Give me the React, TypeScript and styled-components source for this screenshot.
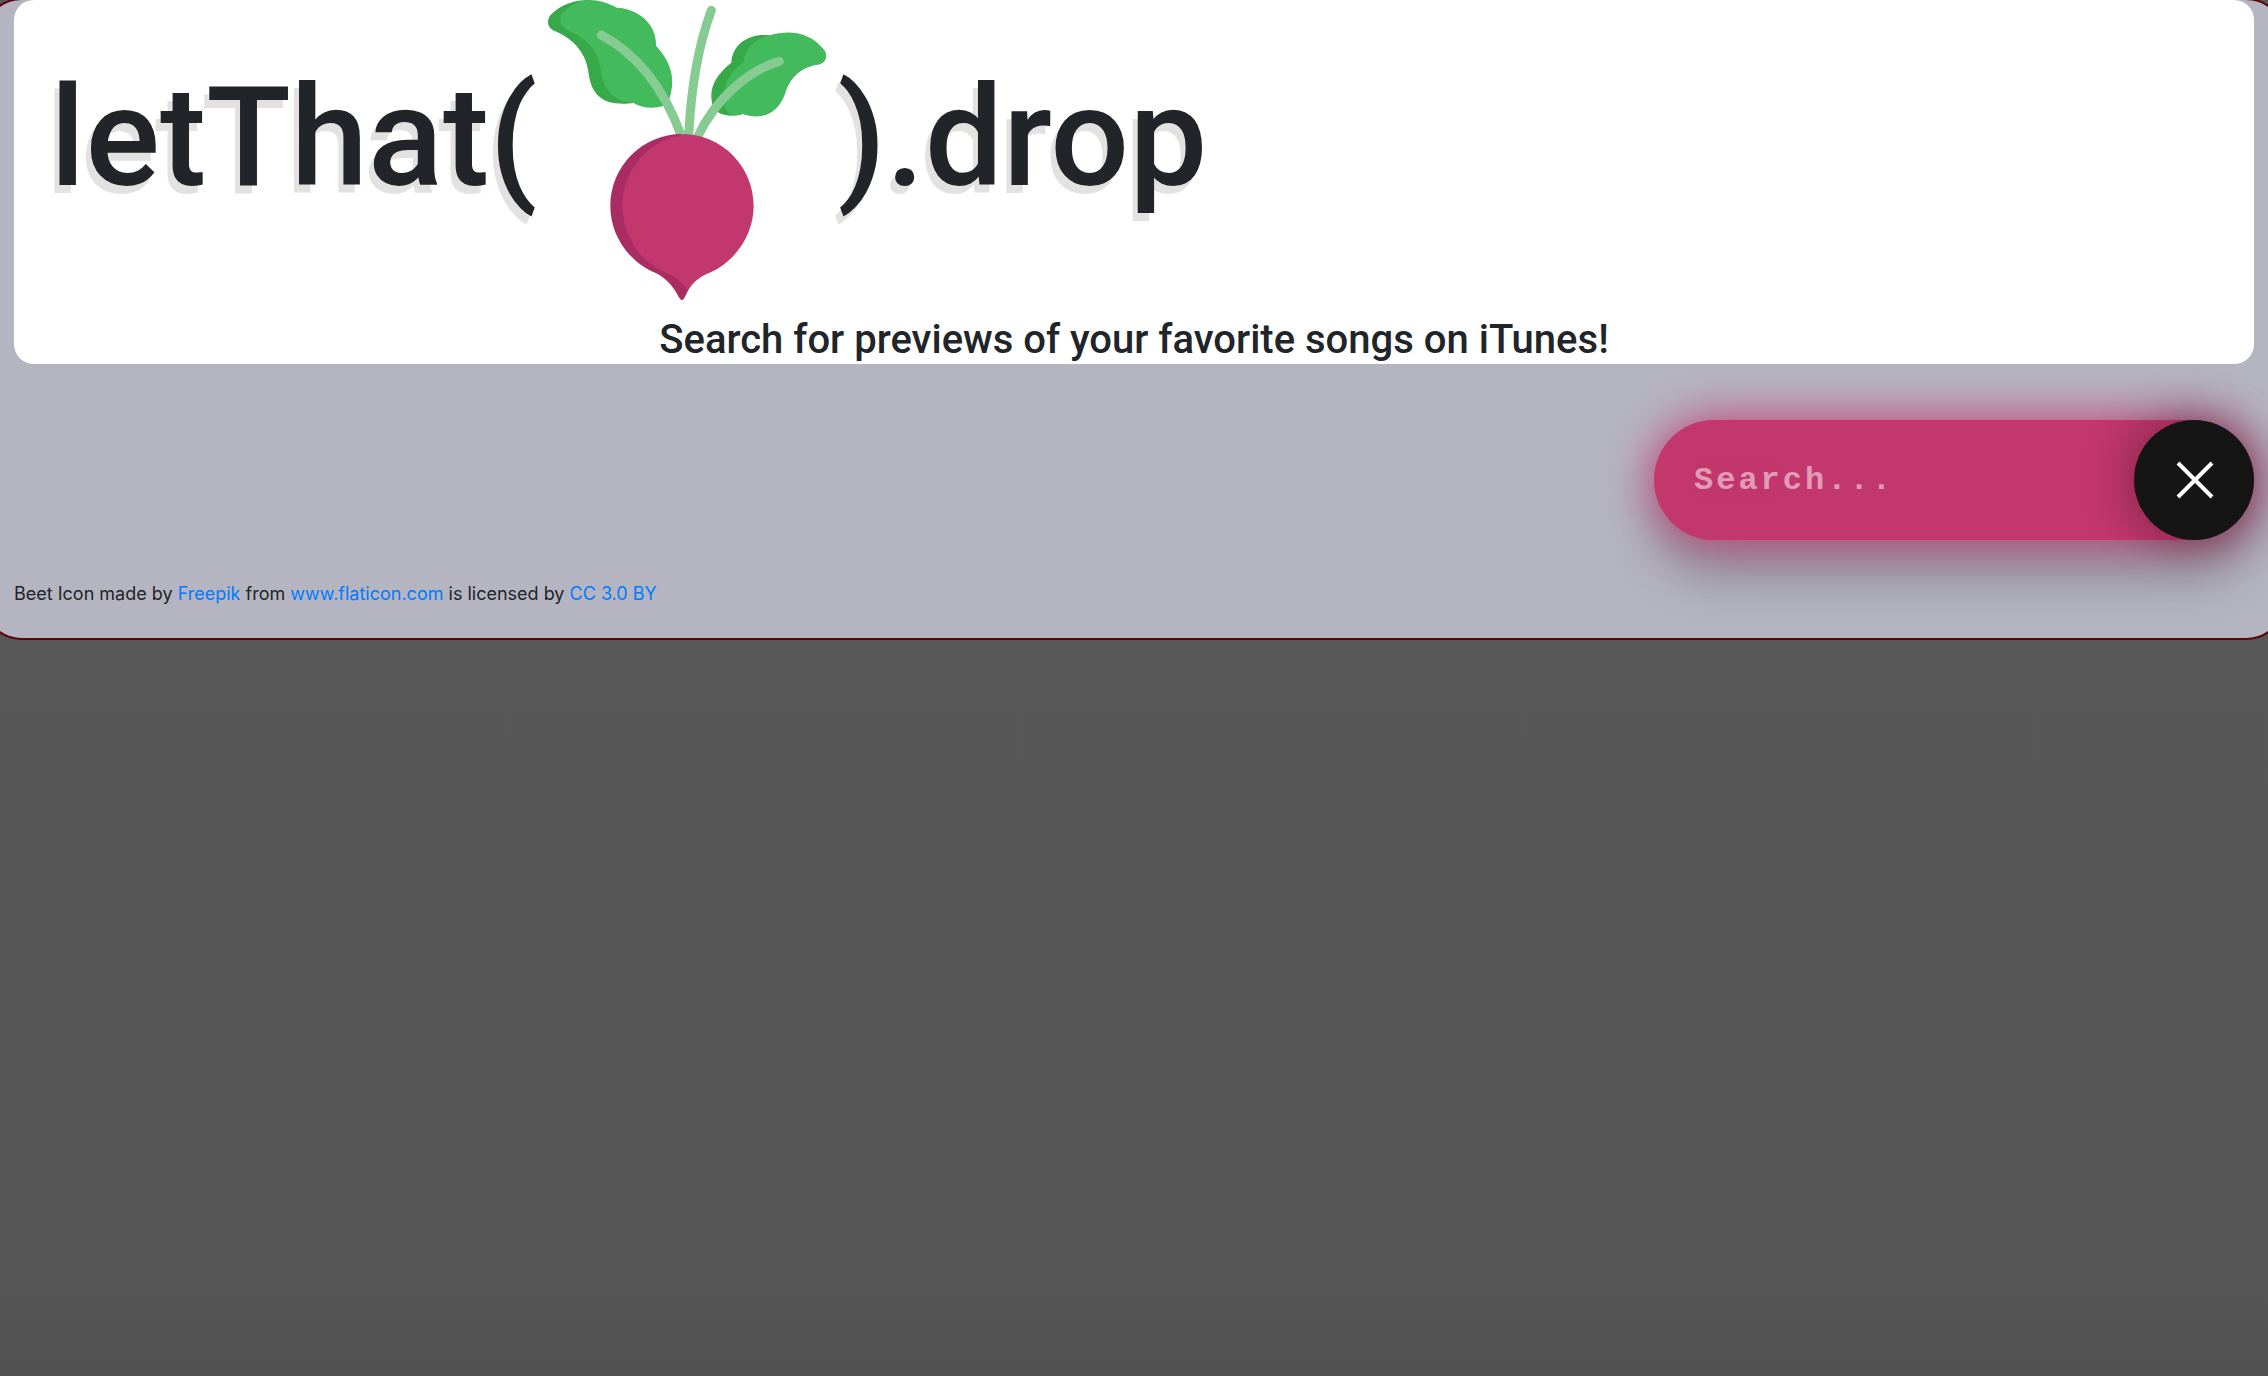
import React, { useState } from "react";
import styled, { createGlobalStyle } from "styled-components";

const GlobalStyle = createGlobalStyle`
  *, *::before, *::after { box-sizing: border-box; }
  body {
    margin: 0;
    min-height: 100vh;
    overflow-x: hidden;
    color: #212529;
    background: linear-gradient(to bottom, #575757 0%, #565656 94%, #505050 100%);
    font-family: Inter, "Liberation Sans", sans-serif;
    font-size: 32px;
    line-height: 48px;
  }
`;

const Panel = styled.main`
  display: flex;
  flex-direction: column;
  margin: -2px -18px 0;
  padding: 0 30px 30px;
  overflow: hidden;
  border: 2px solid #5c0208;
  border-radius: 40px;
  background: #b5b5c2;
`;

const Header = styled.header`
  border-radius: 20px;
  background: #fff;
  font-family: Roboto, "Liberation Sans", sans-serif;
`;

const Title = styled.h1`
  display: flex;
  align-items: flex-start;
  margin: 0;
  padding: 0 36px 16px;
  font-size: 139px;
  font-weight: 500;
  line-height: 168px;
  text-shadow: -5px 8px #e4e2e1;
`;

const TitleText = styled.span`
  padding-top: 54px;
`;

const BeetDrawing = styled.svg`
  width: 300px;
  height: 300px;
  flex: none;
`;

const Tagline = styled.h2`
  margin: 0;
  font-size: 40px;
  font-weight: 500;
  line-height: 48px;
  text-align: center;
`;

const SearchForm = styled.form`
  display: flex;
  justify-content: flex-end;
  padding: 56px 0 40px;
`;

const SearchInput = styled.input`
  width: 600px;
  height: 120px;
  padding: 0 160px 0 40px;
  border: 0;
  outline: 0;
  border-radius: 60px;
  background: #c2376e;
  box-shadow: 0 0 50px #c2376e, 0 40px 50px rgba(0, 0, 0, 0.2);
  color: #fff;
  font-family: "Liberation Mono", monospace;
  font-size: 32px;
  font-weight: 700;
  letter-spacing: 3px;

  &::placeholder {
    color: #fff;
    opacity: 0.5;
  }
`;

const CloseButton = styled.button`
  display: grid;
  place-items: center;
  width: 120px;
  height: 120px;
  margin-left: -120px;
  padding: 0;
  border: 0;
  border-radius: 50%;
  background: #151515;
  box-shadow: 0 0 50px rgba(0, 0, 0, 0.4);
  cursor: pointer;
  z-index: 1;
`;

const Credit = styled.footer`
  font-size: 18px;
  line-height: 28px;
`;

const CreditLink = styled.a`
  color: #007bff;
  text-decoration: none;
`;

function Beet() {
  return (
    <BeetDrawing viewBox="54 0 900 900" role="img" aria-label="beet">
      <path
        fill="#38a948"
        d="M100 40C130 12 168 0 210 0L300 40L345 308C325 312 295 313 270 306C232 294 214 262 209 222C203 160 165 116 105 92C84 84 80 58 100 40Z"
      />
      <path
        fill="#43ba5b"
        d="M134 36C155 14 180 1 210 0C240 0 270 10 293 23C360 26 414 74 411 137C452 182 472 230 452 294L432 318C402 327 368 324 342 308C285 306 255 270 247 218C240 156 208 116 144 90C122 80 117 54 134 36Z"
      />
      <path
        fill="#38a948"
        d="M752 106C694 98 640 130 637 188C588 226 566 270 582 318L596 336C616 349 648 350 670 342L720 180Z"
      />
      <path
        fill="#43ba5b"
        d="M752 106C816 88 874 98 916 150C930 172 916 192 896 194C842 202 812 236 798 282C776 344 724 361 670 342C654 348 640 348 630 340C606 318 610 278 624 244C634 220 650 202 674 186C678 146 706 116 752 106Z"
      />
      <path
        fill="none"
        stroke="#86cc92"
        strokeWidth="27"
        strokeLinecap="round"
        d="M247 105C350 160 432 258 486 405M577 31C535 144 516 265 509 408M781 184C690 210 590 295 535 412"
      />
      <path
        fill="#aa2c64"
        d="M489 402C370 402 274 499 274 618C274 707 330 784 405 817C440 832 462 858 481 894Q489 906 496 894L507 872L550 600Z"
      />
      <path
        fill="#c2376e"
        d="M489 402C609 402 704 500 704 618C704 705 648 786 570 819C541 831 521 848 507 872C491 848 470 830 442 819C365 787 310 708 310 618C310 505 395 412 507 402Z"
      />
    </BeetDrawing>
  );
}

function CloseIcon() {
  return (
    <svg width="40" height="40" viewBox="0 0 40 40" aria-hidden="true">
      <path d="M4 3L38 37M38 3L4 37" stroke="#fff" strokeWidth="4" />
    </svg>
  );
}

export default function App() {
  const [query, setQuery] = useState("");

  return (
    <>
      <GlobalStyle />
      <Panel>
        <Header>
          <Title>
            <TitleText>letThat(</TitleText>
            <Beet />
            <TitleText>).drop</TitleText>
          </Title>
          <Tagline>Search for previews of your favorite songs on iTunes!</Tagline>
        </Header>
        <SearchForm onSubmit={(e) => e.preventDefault()}>
          <SearchInput
            type="text"
            aria-label="Search songs"
            placeholder="Search..."
            value={query}
            onChange={(e) => setQuery(e.target.value)}
          />
          <CloseButton type="button" aria-label="Clear search" onClick={() => setQuery("")}>
            <CloseIcon />
          </CloseButton>
        </SearchForm>
        <Credit>
          Beet Icon made by <CreditLink href="#freepik">Freepik</CreditLink> from{" "}
          <CreditLink href="#flaticon">www.flaticon.com</CreditLink> is licensed by{" "}
          <CreditLink href="#license">CC 3.0 BY</CreditLink>
        </Credit>
      </Panel>
    </>
  );
}
